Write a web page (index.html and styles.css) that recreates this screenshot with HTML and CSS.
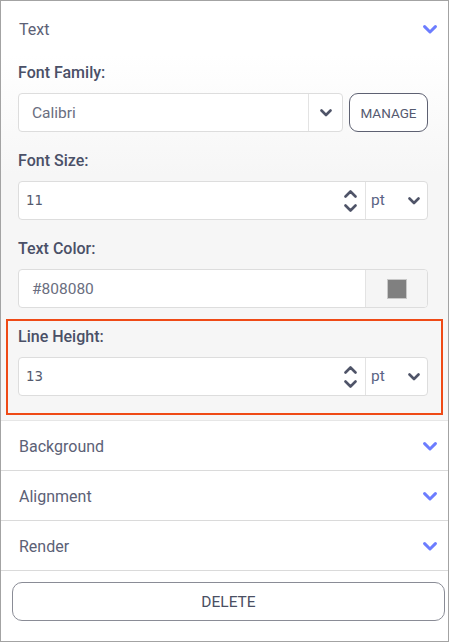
FILE: index.html
```html
<!DOCTYPE html>
<html>
<head>
<meta charset="utf-8">
<link rel="stylesheet" href="styles.css">
</head>
<body>
<div class="panel">
  <div class="acc-head">
    <span class="acc-title">Text</span>
    <svg class="acc-chev" width="14" height="9" viewBox="0 0 14 9"><polyline points="1.6,1.6 7,7 12.4,1.6"/></svg>
  </div>
  <div class="acc-body">
    <div class="group">
      <div class="label">Font Family:</div>
      <div class="row">
        <div class="field grow">
          <div class="value">Calibri</div>
          <div class="drop">
            <svg class="chev" width="12" height="8" viewBox="0 0 12 8"><polyline points="1.5,1.5 6,6 10.5,1.5"/></svg>
          </div>
        </div>
        <button class="btn-manage">MANAGE</button>
      </div>
    </div>
    <div class="group">
      <div class="label">Font Size:</div>
      <div class="field">
        <div class="value num">11</div>
        <div class="spin">
          <svg class="chev" width="13" height="8" viewBox="0 0 13 8"><polyline points="1.5,6.5 6.5,1.5 11.5,6.5"/></svg>
          <svg class="chev" width="13" height="8" viewBox="0 0 13 8"><polyline points="1.5,1.5 6.5,6.5 11.5,1.5"/></svg>
        </div>
        <div class="unit">
          <span>pt</span>
          <svg class="chev" width="12" height="8" viewBox="0 0 12 8"><polyline points="1.5,1.5 6,6 10.5,1.5"/></svg>
        </div>
      </div>
    </div>
    <div class="group">
      <div class="label">Text Color:</div>
      <div class="field">
        <div class="value">#808080</div>
        <div class="swatch-box"><span class="swatch"></span></div>
      </div>
    </div>
    <div class="group highlight">
      <div class="label">Line Height:</div>
      <div class="field">
        <div class="value num">13</div>
        <div class="spin">
          <svg class="chev" width="13" height="8" viewBox="0 0 13 8"><polyline points="1.5,6.5 6.5,1.5 11.5,6.5"/></svg>
          <svg class="chev" width="13" height="8" viewBox="0 0 13 8"><polyline points="1.5,1.5 6.5,6.5 11.5,1.5"/></svg>
        </div>
        <div class="unit">
          <span>pt</span>
          <svg class="chev" width="12" height="8" viewBox="0 0 12 8"><polyline points="1.5,1.5 6,6 10.5,1.5"/></svg>
        </div>
      </div>
    </div>
  </div>
  <div class="acc-row">
    <span class="acc-title">Background</span>
    <svg class="acc-chev" width="14" height="9" viewBox="0 0 14 9"><polyline points="1.6,1.6 7,7 12.4,1.6"/></svg>
  </div>
  <div class="acc-row">
    <span class="acc-title">Alignment</span>
    <svg class="acc-chev" width="14" height="9" viewBox="0 0 14 9"><polyline points="1.6,1.6 7,7 12.4,1.6"/></svg>
  </div>
  <div class="acc-row">
    <span class="acc-title">Render</span>
    <svg class="acc-chev" width="14" height="9" viewBox="0 0 14 9"><polyline points="1.6,1.6 7,7 12.4,1.6"/></svg>
  </div>
  <div class="footer">
    <button class="btn-delete">DELETE</button>
  </div>
</div>
</body>
</html>
```

FILE: styles.css
```css
* { box-sizing: border-box; }
html, body { margin: 0; padding: 0; background: #fff; }
body { font-family: Roboto, "Liberation Sans", sans-serif; }

.panel {
  width: 449px;
  height: 642px;
  border: 1px solid #a3a3a3;
  display: flex;
  flex-direction: column;
  background: #fff;
}

.acc-head, .acc-row {
  display: flex;
  align-items: center;
  justify-content: space-between;
  padding: 2px 11px 0 18px;
}
.acc-head { height: 54px; padding-top: 3px; }
.acc-row { height: 50px; border-bottom: 1px solid #dadada; }

.acc-title {
  font-size: 16px;
  color: #5c6176;
}
.acc-chev polyline {
  fill: none;
  stroke: #6c7dff;
  stroke-width: 3;
  stroke-linecap: round;
  stroke-linejoin: round;
}

.acc-body {
  background: linear-gradient(#ffffff 0, #f6f6f6 120px);
  padding: 9px 20px 24px 17px;
  border-bottom: 1px solid #e6e6e6;
  display: flex;
  flex-direction: column;
  gap: 20px;
}

.group { position: relative; }
.highlight::after {
  content: "";
  position: absolute;
  top: -9px;
  left: -12px;
  right: -15px;
  bottom: -19px;
  border: 2px solid #ef4a16;
  pointer-events: none;
}

.label {
  font-size: 16px;
  line-height: 18px;
  font-weight: 500;
  color: #4a5067;
  margin-bottom: 11px;
}

.row { display: flex; gap: 6px; }

.field {
  display: flex;
  height: 39px;
  border: 1px solid #dddddd;
  border-radius: 4px;
  background: #fff;
  overflow: hidden;
}
.grow { flex: 1; }

.value {
  flex: 1;
  display: flex;
  align-items: center;
  padding-left: 13px;
  font-size: 15.5px;
  color: #6a6e80;
}
.value.num {
  padding-left: 7px;
  font-family: "DejaVu Sans", sans-serif;
  font-size: 13.33px;
  color: #555a6e;
}

.chev polyline {
  fill: none;
  stroke: #4f5468;
  stroke-width: 2.6;
  stroke-linecap: round;
  stroke-linejoin: round;
}

.drop {
  width: 34px;
  border-left: 1px solid #e3e3e3;
  display: flex;
  align-items: center;
  justify-content: center;
}

.spin {
  display: flex;
  flex-direction: column;
  justify-content: center;
  gap: 6px;
  padding-right: 8px;
}

.unit {
  width: 62px;
  border-left: 1px solid #e3e3e3;
  display: flex;
  align-items: center;
  justify-content: space-between;
  padding: 0 7px 0 5px;
  font-size: 15.5px;
  color: #5a6585;
}
.unit span { margin-top: -2px; }

.swatch-box {
  width: 62px;
  border-left: 1px solid #e3e3e3;
  background: #f5f5f5;
  display: flex;
  align-items: center;
  justify-content: center;
}
.swatch {
  width: 20px;
  height: 20px;
  background: #808080;
  border: 1px solid #c8c8c8;
}

.btn-manage {
  width: 79px;
  height: 39px;
  border: 1px solid #5e6172;
  border-radius: 9px;
  background: #fff;
  font-family: Roboto, "Liberation Sans", sans-serif;
  font-size: 13.5px;
  color: #555a70;
  padding: 0;
}

.footer {
  flex: 1;
  padding: 11px 3px 0 11px;
}
.btn-delete {
  width: 100%;
  height: 39px;
  border: 1px solid #8a8c96;
  border-radius: 10px;
  background: #fff;
  font-family: Roboto, "Liberation Sans", sans-serif;
  font-size: 15.5px;
  color: #4a4f63;
  padding: 0;
}
```
